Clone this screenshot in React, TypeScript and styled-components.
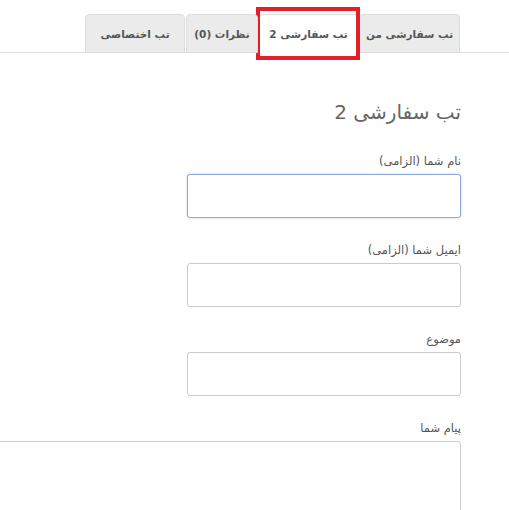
import React from "react";
import styled, { createGlobalStyle } from "styled-components";

const GlobalStyle = createGlobalStyle`
  html, body {
    margin: 0;
    padding: 0;
    background: #ffffff;
    overflow: hidden;
  }
  body {
    font-family: "DejaVu Sans", "Noto Sans", sans-serif;
  }
`;

const Page = styled.div`
  direction: rtl;
  width: 509px;
  height: 510px;
  overflow: hidden;
  padding-top: 14px;
  box-sizing: border-box;
`;

const TabBar = styled.ul`
  list-style: none;
  margin: 0;
  padding: 0 49px 0 0;
  display: flex;
  border-bottom: 1px solid #dddddd;
  height: 38px;
`;

const Tab = styled.li<{ $active?: boolean; $width: number }>`
  position: relative;
  width: ${(p) => p.$width}px;
  height: 39px;
  margin-left: 1px;
  box-sizing: border-box;
  display: flex;
  align-items: center;
  justify-content: center;
  white-space: nowrap;
  font-size: 10.5px;
  font-weight: bold;
  color: #555555;
  background: ${(p) => (p.$active ? "#ffffff" : "#ebebeb")};
  border: 1px solid #dddddd;
  border-bottom-color: ${(p) => (p.$active ? "#ffffff" : "#dddddd")};
  border-radius: 4px 4px 0 0;
`;

const Highlight = styled.span`
  position: absolute;
  top: -8px;
  bottom: -8px;
  left: -4px;
  right: -3px;
  border: 4px solid #e3202a;
  pointer-events: none;
`;

const Content = styled.div`
  padding: 47px 48px 0 0;
`;

const Heading = styled.h3`
  margin: 0 0 28px 0;
  font-size: 20px;
  font-weight: normal;
  line-height: 25px;
  color: #666666;
`;

const Field = styled.div`
  margin-bottom: 24px;
`;

const Label = styled.label`
  display: block;
  font-size: 11.5px;
  line-height: 17px;
  color: #555555;
  margin-bottom: 4px;
`;

const TextInput = styled.input<{ $focused?: boolean }>`
  display: block;
  width: 274px;
  height: 44px;
  box-sizing: border-box;
  border: 1px solid ${(p) => (p.$focused ? "#8fa9d8" : "#cccccc")};
  border-radius: 3px;
  box-shadow: ${(p) =>
    p.$focused ? "0 0 2px rgba(102, 140, 210, 0.5)" : "none"};
  outline: none;
  background: #ffffff;
`;

const TextArea = styled.textarea`
  display: block;
  width: 560px;
  height: 140px;
  box-sizing: border-box;
  border: 1px solid #cccccc;
  border-radius: 3px;
  resize: none;
  outline: none;
`;

const tabs = [
  { title: "تب سفارشی من", width: 101 },
  { title: "تب سفارشی 2", width: 99, active: true },
  { title: "نظرات (0)", width: 72 },
  { title: "تب اختصاصی", width: 100 },
];

export default function App() {
  return (
    <>
      <GlobalStyle />
      <Page>
        <TabBar>
          {tabs.map((t) => (
            <Tab key={t.title} $active={t.active} $width={t.width}>
              {t.title}
              {t.active && <Highlight />}
            </Tab>
          ))}
        </TabBar>
        <Content>
          <Heading>تب سفارشی 2</Heading>
          <Field>
            <Label>نام شما (الزامی)</Label>
            <TextInput $focused />
          </Field>
          <Field>
            <Label>ایمیل شما (الزامی)</Label>
            <TextInput />
          </Field>
          <Field>
            <Label>موضوع</Label>
            <TextInput />
          </Field>
          <Field>
            <Label>پیام شما</Label>
            <TextArea />
          </Field>
        </Content>
      </Page>
    </>
  );
}
